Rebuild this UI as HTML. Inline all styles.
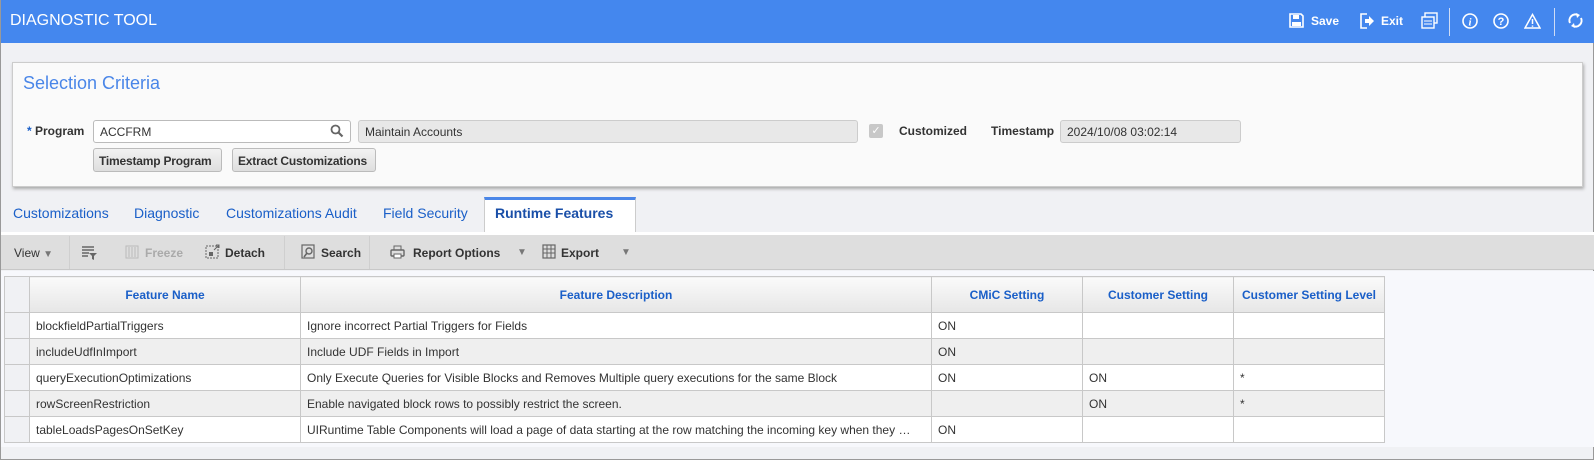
<!DOCTYPE html>
<html><head><meta charset="utf-8"><style>
*{box-sizing:border-box;margin:0;padding:0}
body{width:1594px;height:460px;overflow:hidden;background:#f0f1f4;font-family:"Liberation Sans",Arial,sans-serif;font-size:12px;color:#333;position:relative;border-left:1px solid #999;border-right:1px solid #999;border-bottom:1px solid #999}
.a{position:absolute;white-space:nowrap}
.top{left:0;top:0;width:1594px;height:43px;background:#4487ee;color:#fff}
.top .t{left:9px;top:12px;font-size:16px}
.top .b{top:14px;font-size:12px;font-weight:bold}
.panel{left:11px;top:62px;width:1571px;height:125px;background:#fafafa;border:1px solid #ccc;box-shadow:1px 2px 3px #aaa}
.inp{height:23px;border:1px solid #bbb;border-radius:3px;background:#fff;padding:4px 6px;font-size:12px}
.ro{background:#e8e8e8;border-color:#ccc}
.btn{height:24px;border:1px solid #bbb;border-radius:3px;background:linear-gradient(#f2f2f2,#dedede);font-weight:bold;padding:5px 5px;font-size:12px;color:#333;white-space:nowrap;letter-spacing:-0.2px}
.tab{top:205px;font-size:14px;color:#1a5fc8}
.tb{top:246px;font-weight:bold;color:#333}
table{border-collapse:collapse;position:absolute;left:3px;top:276px;background:#fff}
td,th{border:1px solid #c8c8c8;height:26px;padding:0 6px;font-size:12px;white-space:nowrap;overflow:hidden;text-align:left}
th{height:36px;background:linear-gradient(#fafafa,#e6e6e6);color:#1a5fc8;text-align:center}
tr:nth-child(odd) td{background:#efefef}
tr:nth-child(odd) td.rh,td.rh{background:#f0f1f4}
</style></head><body>
<div class="a top">
 <div class="a t">DIAGNOSTIC TOOL</div>
 <svg class="a" style="left:1288px;top:13px" width="15" height="15" viewBox="0 0 15 15"><path d="M1 1h11l2 2v11H1z" fill="none" stroke="#fff" stroke-width="1.6"/><rect x="4" y="2" width="6" height="4" fill="#fff"/><rect x="3" y="9" width="9" height="4" fill="#fff"/></svg>
 <div class="a b" style="left:1310px">Save</div>
 <svg class="a" style="left:1358px;top:13px" width="16" height="16" viewBox="0 0 16 16"><path d="M8 1H2v14h6" fill="none" stroke="#fff" stroke-width="1.6"/><path d="M6 6h4V3l5 5-5 5v-3H6z" fill="#fff"/></svg>
 <div class="a b" style="left:1380px">Exit</div>
 <svg class="a" style="left:1420px;top:12px" width="17" height="17" viewBox="0 0 17 17"><rect x="4" y="1" width="12" height="10" fill="none" stroke="#fff" stroke-width="1.4"/><rect x="1" y="5" width="12" height="11" fill="#4487ee" stroke="#fff" stroke-width="1.4"/><path d="M3 9h8M3 12h8" stroke="#fff"/></svg>
 <div class="a" style="left:1448px;top:8px;width:1px;height:28px;background:#cfdcf5"></div>
 <svg class="a" style="left:1461px;top:13px" width="16" height="16"><circle cx="8" cy="8" r="7" fill="none" stroke="#fff" stroke-width="1.6"/><text x="8" y="12.5" fill="#fff" font-size="11" font-weight="bold" font-style="italic" text-anchor="middle" font-family="Liberation Serif">i</text></svg>
 <svg class="a" style="left:1492px;top:13px" width="16" height="16"><circle cx="8" cy="8" r="7" fill="none" stroke="#fff" stroke-width="1.6"/><text x="8" y="12" fill="#fff" font-size="11" font-weight="bold" text-anchor="middle" font-family="Liberation Sans">?</text></svg>
 <svg class="a" style="left:1523px;top:13px" width="17" height="16"><path d="M8.5 1.5L16 15H1z" fill="none" stroke="#fff" stroke-width="1.5"/><path d="M8.5 6v5M8.5 12.5v1.3" stroke="#fff" stroke-width="1.5"/></svg>
 <div class="a" style="left:1553px;top:8px;width:1px;height:28px;background:#cfdcf5"></div>
 <svg class="a" style="left:1566px;top:12px" width="17" height="17" viewBox="0 0 17 17"><path d="M3 11A6 6 0 0 1 11 3M14 6A6 6 0 0 1 6 14" fill="none" stroke="#fff" stroke-width="2"/><path d="M9 1l4 2-3 3zM8 16l-4-2 3-3z" fill="#fff"/></svg>
</div>
<div class="a panel"></div>
<div class="a" style="left:22px;top:73px;font-size:18px;color:#4a86e8">Selection Criteria</div>
<div class="a" style="left:26px;top:124px;font-weight:bold"><span style="color:#1a5fc8">*</span> Program</div>
<div class="a inp" style="left:92px;top:120px;width:258px">ACCFRM</div>
<svg class="a" style="left:329px;top:124px" width="14" height="14"><circle cx="5.5" cy="5.5" r="4" fill="none" stroke="#666" stroke-width="1.8"/><path d="M8.5 8.5l4 4" stroke="#666" stroke-width="2.2"/></svg>
<div class="a inp ro" style="left:357px;top:120px;width:500px">Maintain Accounts</div>
<div class="a" style="left:868px;top:124px;width:14px;height:14px;background:#c8c8c8;border-radius:2px;color:#fff;font-size:11px;text-align:center;line-height:14px">✓</div>
<div class="a" style="left:898px;top:124px;font-weight:bold">Customized</div>
<div class="a" style="left:990px;top:124px;font-weight:bold">Timestamp</div>
<div class="a inp ro" style="left:1059px;top:120px;width:181px">2024/10/08 03:02:14</div>
<div class="a btn" style="left:92px;top:148px;width:129px">Timestamp Program</div>
<div class="a btn" style="left:231px;top:148px;width:144px">Extract Customizations</div>
<div class="a tab" style="left:12px">Customizations</div>
<div class="a tab" style="left:133px">Diagnostic</div>
<div class="a tab" style="left:225px">Customizations Audit</div>
<div class="a tab" style="left:382px">Field Security</div>
<div class="a" style="left:483px;top:197px;width:152px;height:38px;background:#fff;border:1px solid #ccc;border-top:3px solid #4a86e8;border-bottom:none"></div>
<div class="a tab" style="left:494px;font-weight:bold;color:#1a4fa8">Runtime Features</div>
<div class="a" style="left:0;top:232px;width:1594px;height:3px;background:#fff"></div>
<div class="a" style="left:0;top:235px;width:1594px;height:35px;background:#dedede;border-bottom:1px solid #c8c8c8"></div>
<div class="a tb" style="left:13px;font-weight:normal">View <span style="color:#777;font-size:10px">▼</span></div>
<div class="a" style="left:68px;top:236px;width:1px;height:33px;background:#cfcfcf"></div>
<svg class="a" style="left:80px;top:245px" width="16" height="16"><path d="M1 2h12M1 5h12M1 8h7M1 11h6" stroke="#666" stroke-width="1.5"/><path d="M8 8h8l-3 3v4l-2-1v-3z" fill="#666"/></svg>
<svg class="a" style="left:124px;top:245px" width="14" height="14"><rect x="1" y="1" width="12" height="12" fill="none" stroke="#bbb"/><path d="M4 2v10M7 2v10M10 2v10" stroke="#bbb"/></svg>
<div class="a tb" style="left:144px;color:#aaa">Freeze</div>
<svg class="a" style="left:204px;top:244px" width="15" height="15"><rect x="1" y="2" width="12" height="12" fill="none" stroke="#666" stroke-dasharray="2 1"/><rect x="4" y="8" width="4" height="4" fill="#666"/><path d="M9 6l5-5M11 1h3v3" stroke="#666" fill="none"/></svg>
<div class="a tb" style="left:224px">Detach</div>
<div class="a" style="left:283px;top:236px;width:1px;height:33px;background:#cfcfcf"></div>
<svg class="a" style="left:300px;top:244px" width="15" height="16"><rect x="1" y="1" width="12" height="13" fill="none" stroke="#666" stroke-width="1.2"/><circle cx="8" cy="7" r="3" fill="none" stroke="#666" stroke-width="1.4"/><path d="M6 9l-3 4" stroke="#666" stroke-width="1.6"/></svg>
<div class="a tb" style="left:320px">Search</div>
<div class="a" style="left:368px;top:236px;width:1px;height:33px;background:#cfcfcf"></div>
<svg class="a" style="left:389px;top:245px" width="15" height="14"><rect x="4" y="1" width="7" height="4" fill="none" stroke="#666"/><rect x="1" y="5" width="13" height="6" rx="1" fill="none" stroke="#666" stroke-width="1.4"/><rect x="4" y="9" width="7" height="4" fill="#fff" stroke="#666"/></svg>
<div class="a tb" style="left:412px">Report Options</div>
<div class="a" style="left:516px;top:247px;color:#777;font-size:10px">▼</div>
<svg class="a" style="left:541px;top:244px" width="15" height="15"><rect x="1" y="1" width="12" height="13" fill="none" stroke="#666" stroke-width="1.2"/><path d="M1 5h12M1 9h12M5 1v13M9 1v13" stroke="#666"/></svg>
<div class="a tb" style="left:560px">Export</div>
<div class="a" style="left:620px;top:247px;color:#777;font-size:10px">▼</div>
<div class="a" style="left:0;top:271px;width:1593px;height:176px;background:#f7f8fc"></div>
<table>
<colgroup><col style="width:25px"><col style="width:271px"><col style="width:631px"><col style="width:151px"><col style="width:151px"><col style="width:151px"></colgroup>
<tr><th class="rh" style="background:#f0f1f4"></th><th>Feature Name</th><th>Feature Description</th><th>CMiC Setting</th><th>Customer Setting</th><th>Customer Setting Level</th></tr>
<tr style="background:#fff"><td class="rh"></td><td style="background:#fff">blockfieldPartialTriggers</td><td style="background:#fff">Ignore incorrect Partial Triggers for Fields</td><td style="background:#fff">ON</td><td style="background:#fff"></td><td style="background:#fff"></td></tr>
<tr><td class="rh"></td><td>includeUdfInImport</td><td>Include UDF Fields in Import</td><td>ON</td><td></td><td></td></tr>
<tr><td class="rh"></td><td style="background:#fff">queryExecutionOptimizations</td><td style="background:#fff">Only Execute Queries for Visible Blocks and Removes Multiple query executions for the same Block</td><td style="background:#fff">ON</td><td style="background:#fff">ON</td><td style="background:#fff">*</td></tr>
<tr><td class="rh"></td><td style="background:#efefef">rowScreenRestriction</td><td style="background:#efefef">Enable navigated block rows to possibly restrict the screen.</td><td style="background:#efefef"></td><td style="background:#efefef">ON</td><td style="background:#efefef">*</td></tr>
<tr><td class="rh"></td><td style="background:#fff">tableLoadsPagesOnSetKey</td><td style="background:#fff">UIRuntime Table Components will load a page of data starting at the row matching the incoming key when they …</td><td style="background:#fff">ON</td><td style="background:#fff"></td><td style="background:#fff"></td></tr>
</table>
</body></html>
